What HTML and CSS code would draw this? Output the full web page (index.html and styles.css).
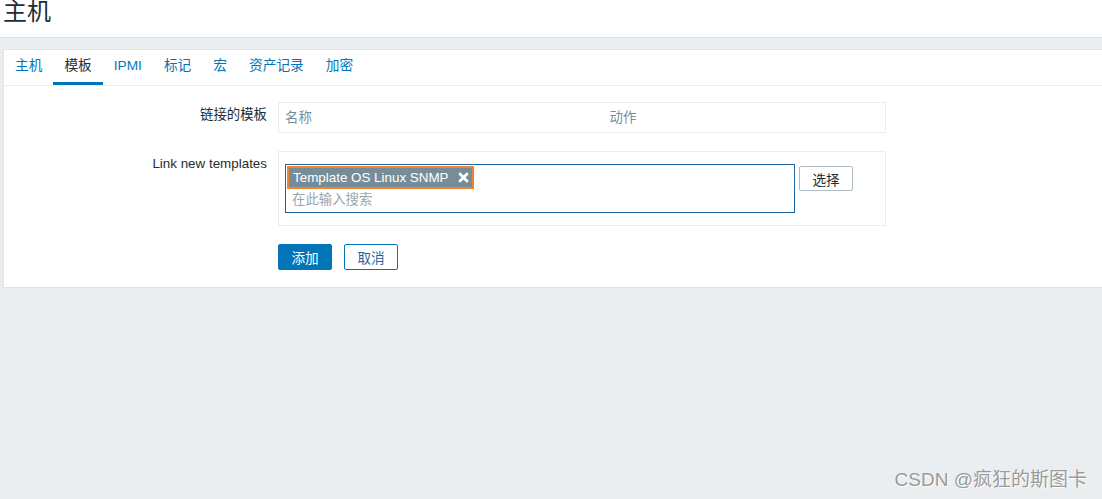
FILE: index.html
```html
<!DOCTYPE html>
<html lang="zh">
<head>
    <meta charset="UTF-8">
    <title>主机</title>
    <link rel="stylesheet" href="styles.css">
</head>
<body>

    <header class="page-header">
        <h1>主机</h1>
    </header>

    <main class="page-body">
        <section class="panel">
            <ul class="tabs">
                <li><a href="#">主机</a></li>
                <li class="active"><a href="#">模板</a></li>
                <li><a href="#">IPMI</a></li>
                <li><a href="#">标记</a></li>
                <li><a href="#">宏</a></li>
                <li><a href="#">资产记录</a></li>
                <li><a href="#">加密</a></li>
            </ul>

            <form class="form-grid">
                <label class="form-label">链接的模板</label>
                <div class="form-field">
                    <table class="linked-table">
                        <tr>
                            <th class="col-name">名称</th>
                            <th>动作</th>
                        </tr>
                    </table>
                </div>

                <label class="form-label">Link new templates</label>
                <div class="form-field">
                    <div class="field-box">
                        <div class="multiselect">
                            <span class="tag">Template OS Linux SNMP
                                <svg class="tag-remove" width="11" height="11" viewBox="0 0 11 11">
                                    <path d="M2 2 L9 9 M9 2 L2 9" stroke="#fff" stroke-width="2.8" stroke-linecap="round"/>
                                </svg>
                            </span>
                            <input class="search" type="text" placeholder="在此输入搜索">
                        </div>
                        <button type="button" class="btn-alt">选择</button>
                    </div>
                </div>

                <div></div>
                <div class="form-actions">
                    <button type="submit" class="btn-main">添加</button>
                    <button type="button" class="btn-cancel">取消</button>
                </div>
            </form>
        </section>
    </main>

    <div class="watermark">CSDN @疯狂的斯图卡</div>
</body>
</html>
```

FILE: styles.css
```css
* {
    box-sizing: border-box;
}
body {
    margin: 0;
    font-family: "Liberation Sans", Arial, "Noto Sans CJK SC", sans-serif;
    font-size: 13.4px;
    color: #1f2c33;
    background-color: #ebeef0;
}
.page-header {
    height: 38px;
    background-color: #fff;
    border-bottom: 1px solid #dfe4e7;
}
.page-header h1 {
    margin: 0;
    padding-left: 3px;
    font-size: 24px;
    font-weight: normal;
    line-height: 24px;
}
.page-body {
    padding: 11px 0 0 3px;
}
.panel {
    background-color: #fff;
    border: 1px solid #dfe4e7;
    border-right: none;
    padding-bottom: 17px;
}
.tabs {
    list-style-type: none;
    margin: 0;
    padding: 0;
    display: flex;
    height: 36px;
    border-bottom: 1px solid #ebeef0;
}
.tabs li {
    padding: 0 11px;
    line-height: 32px;
    border-bottom: 3px solid transparent;
}
.tabs li a {
    color: #0275b8;
    text-decoration: none;
    font-size: 13.7px;
}
.tabs li.active {
    border-bottom-color: #0275b8;
}
.tabs li.active a {
    color: #1f2c33;
}
.form-grid {
    display: grid;
    grid-template-columns: 263px 608px;
    column-gap: 11px;
    row-gap: 18px;
    margin-top: 16px;
}
.form-label {
    text-align: right;
    padding-top: 5px;
    line-height: 16px;
}
.linked-table {
    width: 100%;
    border-collapse: collapse;
    border: 1px solid #ebeef0;
}
.linked-table th {
    text-align: left;
    font-weight: normal;
    color: #768d99;
    height: 30px;
    padding: 0 6px 3px;
}
.linked-table th.col-name {
    width: 325px;
}
.field-box {
    display: flex;
    align-items: flex-start;
    gap: 4px;
    height: 75px;
    border: 1px solid #ebeef0;
    padding: 12px 6px;
}
.multiselect {
    width: 510px;
    height: 49px;
    border: 1px solid #1f65a0;
    padding: 1px 2px 0;
    display: flex;
    flex-direction: column;
    align-items: flex-start;
}
.tag {
    display: inline-flex;
    align-items: center;
    gap: 9px;
    height: 21px;
    padding: 0 4px 0 5px;
    background-color: #768d99;
    color: #fff;
    outline: 2px solid #f5822f;
    outline-offset: -1px;
    margin-top: 1px;
}
.tag-remove {
    display: block;
}
.search {
    border: none;
    outline: none;
    padding: 0 4px;
    margin-top: 1px;
    height: 20px;
    width: 300px;
    font-family: inherit;
    font-size: 13.4px;
}
.search::placeholder {
    color: #9aa5ab;
}
button {
    font-family: inherit;
    font-size: 13.6px;
    height: 26px;
    padding: 0 12px;
    border-radius: 2px;
    cursor: pointer;
}
.btn-alt {
    height: 25px;
    width: 54px;
    margin-top: 2px;
    background-color: #fff;
    color: #1f2c33;
    border: 1px solid #acbbc2;
}
.form-actions {
    display: flex;
    gap: 12px;
}
.btn-main {
    width: 54px;
    background-color: #0275b8;
    border: 1px solid #0275b8;
    color: #fff;
}
.btn-cancel {
    width: 54px;
    background-color: #fff;
    border: 1px solid #0275b8;
    color: #1f65a0;
}
.watermark {
    position: absolute;
    right: 15px;
    bottom: 8px;
    font-size: 19px;
    color: #9a9a9a;
    text-shadow: 1px 1px 0 #fff;
}
```
